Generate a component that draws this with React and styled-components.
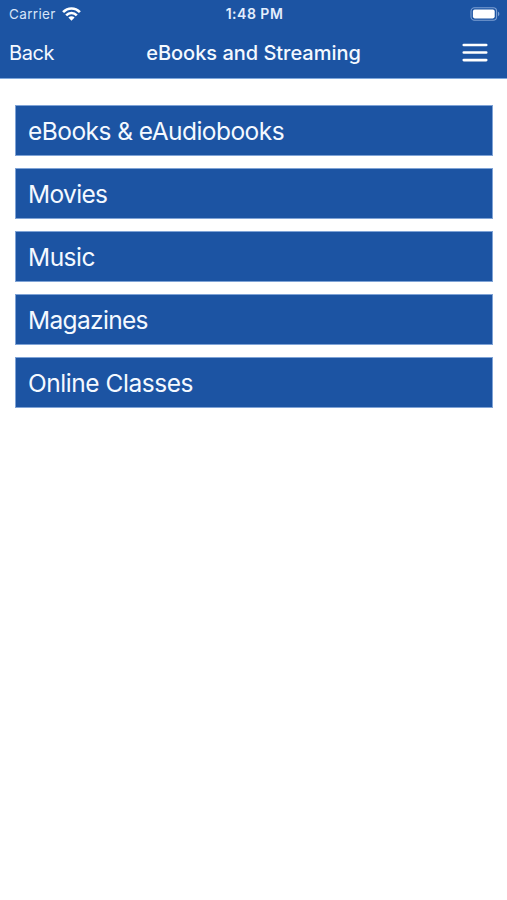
import React from "react";
import styled, { createGlobalStyle } from "styled-components";

const BLUE = "#1c54a3";

const GlobalStyle = createGlobalStyle`
  *, *::before, *::after { box-sizing: border-box; }
  body {
    margin: 0;
    background: #fff;
    color: #f4f9ff;
    font-family: Inter, "Liberation Sans", sans-serif;
  }
  button { font: inherit; color: inherit; border: 0; padding: 0; background: none; }
`;

const Screen = styled.div`
  height: 900px;
  overflow: hidden;
`;

const Header = styled.header`
  height: 79px;
  background: ${BLUE};
  border-bottom: 1px solid #7fa8dc;
`;

const StatusBar = styled.div`
  display: grid;
  grid-template-columns: 1fr auto 1fr;
  align-items: center;
  height: 27px;
  padding: 0 7px 0 9px;
`;

const Carrier = styled.div`
  display: flex;
  align-items: center;
  gap: 6px;
  font-size: 13.5px;
  letter-spacing: 0.35px;
  color: #d6e4f8;
`;

const Time = styled.div`
  font-size: 14px;
  font-weight: 600;
  letter-spacing: 0.5px;
  color: #e3eefd;
`;

const BatteryIcon = styled.svg`
  justify-self: end;
`;

const NavBar = styled.nav`
  display: grid;
  grid-template-columns: 1fr auto 1fr;
  align-items: center;
  height: 51px;
  padding: 0 9px;
`;

const BackButton = styled.button`
  justify-self: start;
  font-size: 20px;
  letter-spacing: -0.4px;
`;

const Title = styled.h1`
  margin: 0;
  font-size: 20px;
  font-weight: 500;
  letter-spacing: -0.02px;
`;

const MenuButton = styled.button`
  justify-self: end;
  display: flex;
  margin-right: 10px;
`;

const Menu = styled.main`
  display: flex;
  flex-direction: column;
  gap: 12px;
  padding: 26px 14px 0 15px;
`;

const MenuItem = styled.button`
  height: 51px;
  padding: 1px 12px 0;
  background: ${BLUE};
  border: 1px solid #7fa3d6;
  text-align: left;
  font-size: 24.5px;
  letter-spacing: ${(p) => p.$tracking}px;
`;

const items = [
  { label: "eBooks & eAudiobooks", tracking: -0.54 },
  { label: "Movies", tracking: -0.65 },
  { label: "Music", tracking: -0.5 },
  { label: "Magazines", tracking: -0.66 },
  { label: "Online Classes", tracking: -0.46 },
];

function WifiIcon() {
  return (
    <svg width="19" height="14" viewBox="0 0 19 14" fill="none" stroke="#fff" strokeWidth="2.6">
      <path d="M1.1 5.2C5.8 .2 13.2 .2 17.9 5.2" />
      <path d="M4.2 8.4C7.2 5.2 11.8 5.2 14.8 8.4" />
      <path d="M6.4 10.5C8.1 8.8 10.9 8.8 12.6 10.5L9.5 13.7Z" fill="#fff" stroke="none" />
    </svg>
  );
}

function Battery() {
  return (
    <BatteryIcon width="30" height="14" viewBox="0 0 30 14">
      <rect x="1" y=".8" width="25.6" height="12.4" rx="3.5" fill="none" stroke="#7c9fd2" strokeWidth="1.1" />
      <rect x="2.9" y="2.6" width="21.8" height="8.8" rx="1.8" fill="#fff" />
      <path d="M28 4.8C29.8 5.4 29.8 8.6 28 9.2Z" fill="#7c9fd2" />
    </BatteryIcon>
  );
}

export default function App() {
  return (
    <Screen>
      <GlobalStyle />
      <Header>
        <StatusBar>
          <Carrier>
            Carrier
            <WifiIcon />
          </Carrier>
          <Time>1:48 PM</Time>
          <Battery />
        </StatusBar>
        <NavBar>
          <BackButton>Back</BackButton>
          <Title>eBooks and Streaming</Title>
          <MenuButton aria-label="Menu">
            <svg width="26" height="20" viewBox="0 0 26 20" stroke="#fff" strokeWidth="2.7" strokeLinecap="round">
              <path d="M1.8 2H24.2M1.8 9.5H24.2M1.8 17.1H24.2" />
            </svg>
          </MenuButton>
        </NavBar>
      </Header>
      <Menu>
        {items.map(({ label, tracking }) => (
          <MenuItem key={label} $tracking={tracking}>
            {label}
          </MenuItem>
        ))}
      </Menu>
    </Screen>
  );
}
